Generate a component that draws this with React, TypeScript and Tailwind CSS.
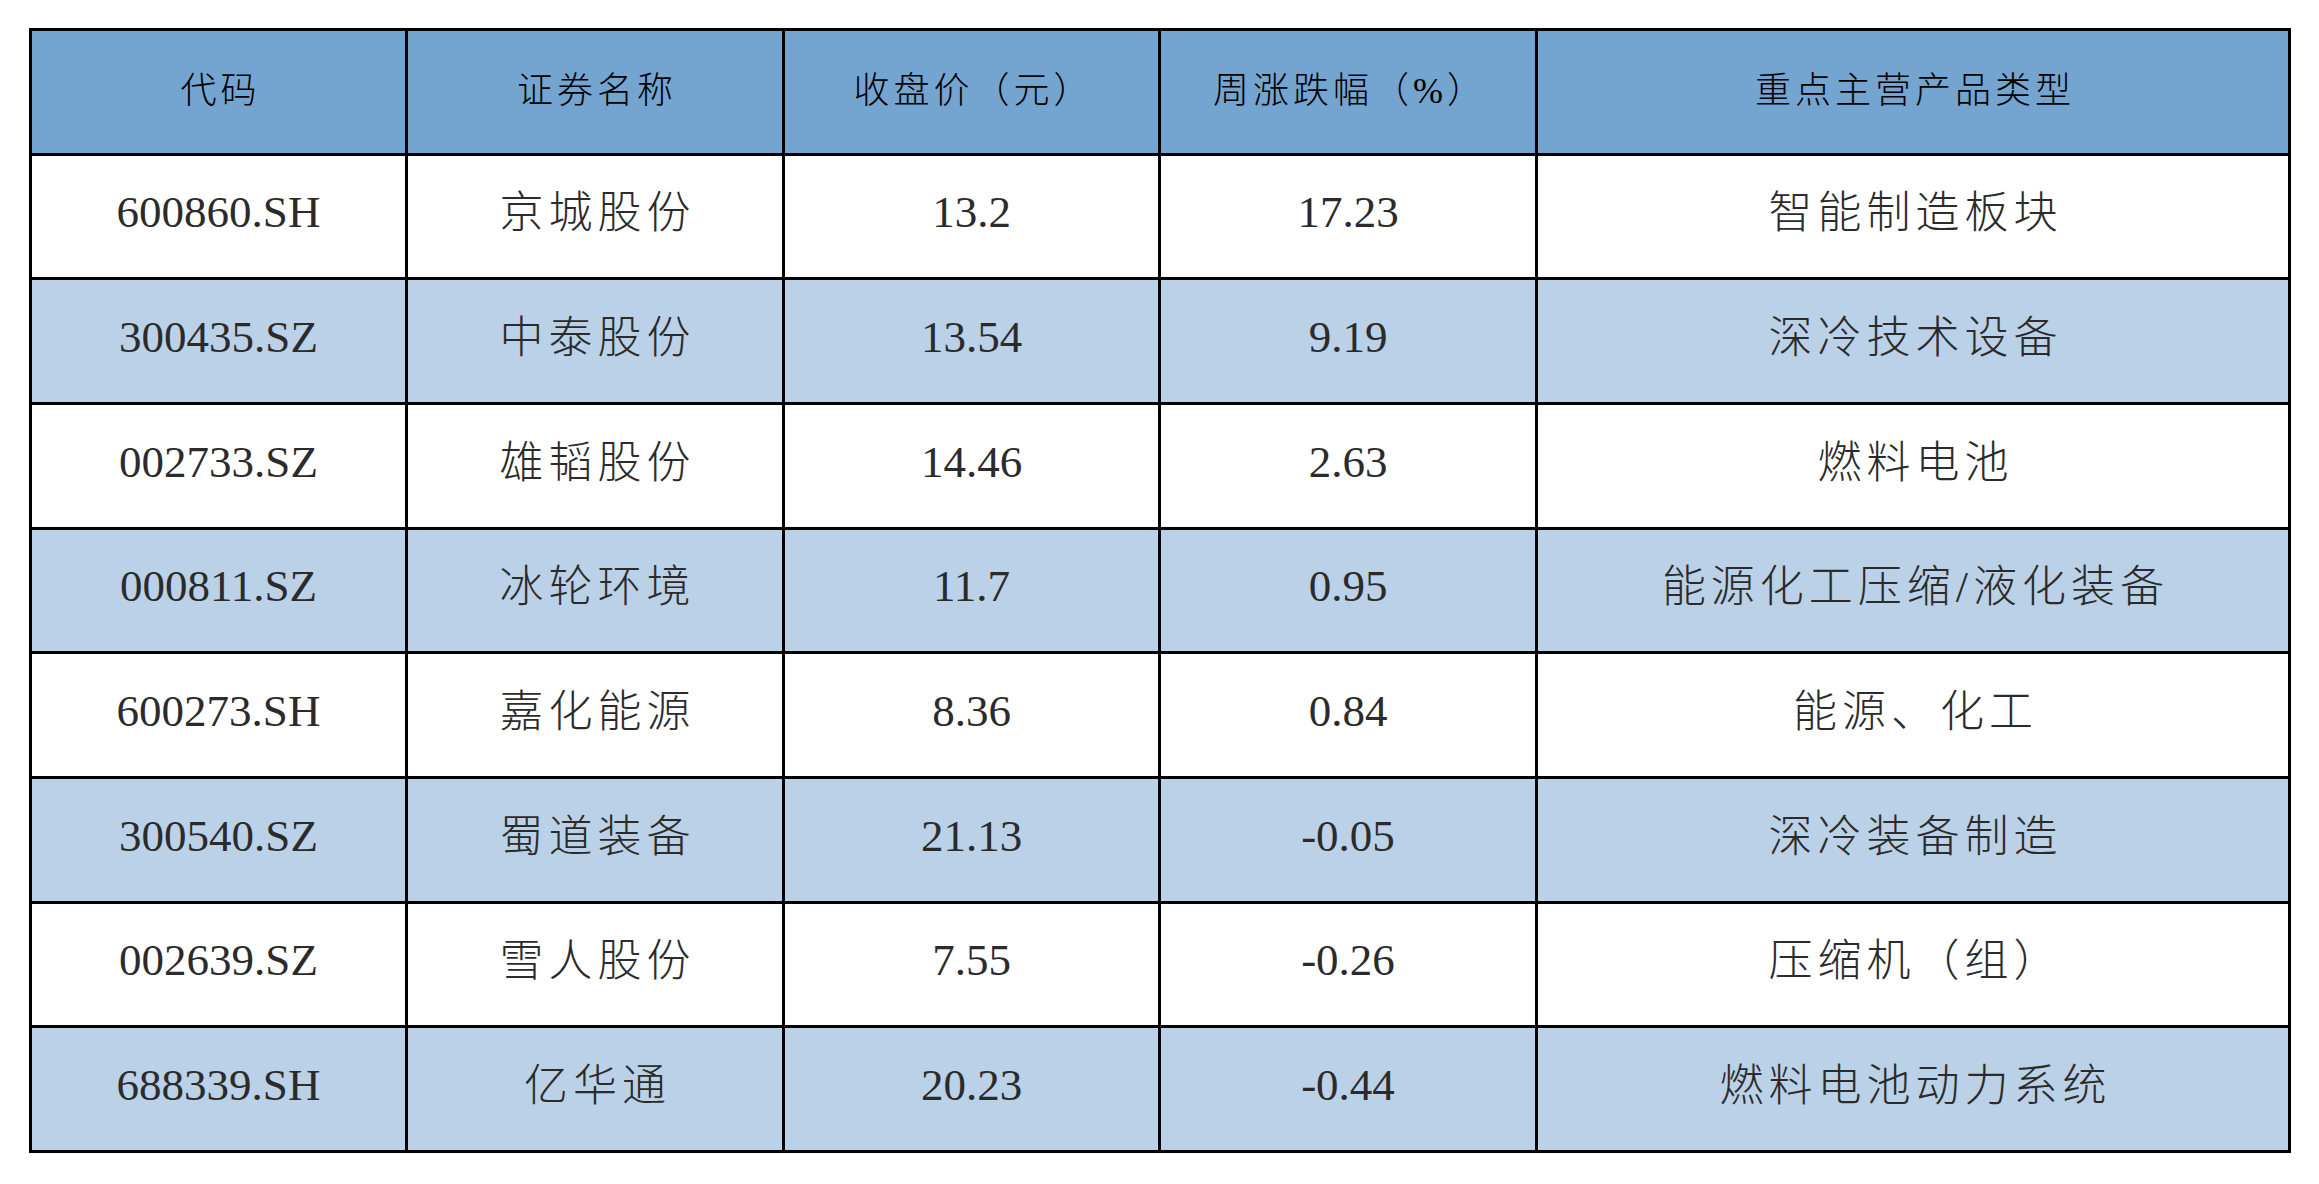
import React from "react";

const rows: [string, string, string, string, string][] = [
  ["600860.SH", "京城股份", "13.2", "17.23", "智能制造板块"],
  ["300435.SZ", "中泰股份", "13.54", "9.19", "深冷技术设备"],
  ["002733.SZ", "雄韬股份", "14.46", "2.63", "燃料电池"],
  ["000811.SZ", "冰轮环境", "11.7", "0.95", "能源化工压缩/液化装备"],
  ["600273.SH", "嘉化能源", "8.36", "0.84", "能源、化工"],
  ["300540.SZ", "蜀道装备", "21.13", "-0.05", "深冷装备制造"],
  ["002639.SZ", "雪人股份", "7.55", "-0.26", "压缩机（组）"],
  ["688339.SH", "亿华通", "20.23", "-0.44", "燃料电池动力系统"],
];

const headers = ["代码", "证券名称", "收盘价（元）", "周涨跌幅（%）", "重点主营产品类型"];

const fontStack = {
  fontFamily: '"Liberation Serif", "Noto Sans CJK SC", serif',
};

export default function App() {
  return (
    <div className="w-[2319px] h-[1184px] bg-white pl-[29px] pt-[28px]" style={fontStack}>
      <div className="grid w-[2262px] h-[1125px] bg-black p-[3px] gap-[3px] grid-cols-[373px_374px_373px_374px_750px] grid-rows-9">
        {headers.map((h) => (
          <div
            key={h}
            className="bg-[#74a4d0] flex items-center justify-center text-[36px] tracking-[4px] text-black font-light pl-[4px] pb-[2px]"
          >
            {h}
          </div>
        ))}
        {rows.map((r, i) => {
          const bg = i % 2 === 0 ? "bg-white" : "bg-[#bad1e8]";
          const num = `${bg} flex items-center justify-center text-[45px] text-[#2b2b2b] pb-[7px]`;
          const cjk = `${bg} flex items-center justify-center text-[44px] tracking-[5px] pl-[5px] pb-[4px] text-[#2b2b2b] font-light`;
          return (
            <React.Fragment key={r[0]}>
              <div className={num}>{r[0]}</div>
              <div className={cjk}>{r[1]}</div>
              <div className={num}>{r[2]}</div>
              <div className={num}>{r[3]}</div>
              <div className={cjk}>{r[4]}</div>
            </React.Fragment>
          );
        })}
      </div>
    </div>
  );
}
